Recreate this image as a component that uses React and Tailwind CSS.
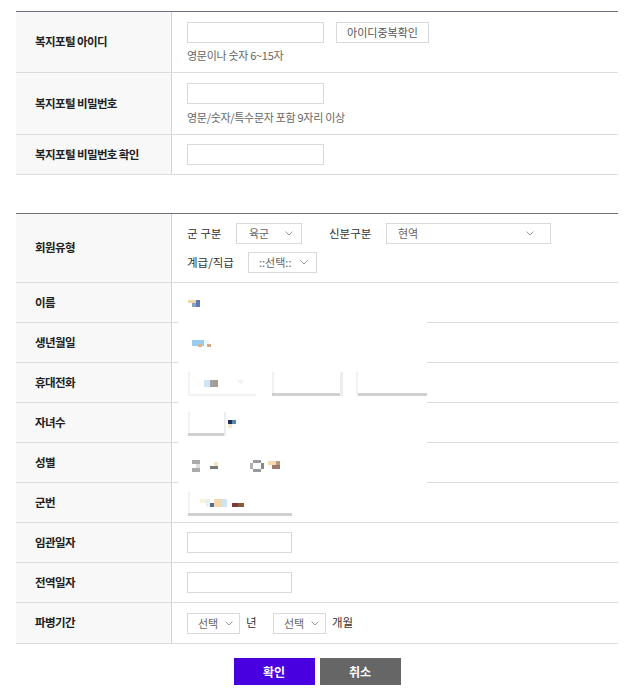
import React from 'react';

const font = { fontFamily: '"Noto Sans CJK KR", "Noto Sans", sans-serif' };

const Chevron = () => (
    <svg width="8" height="5" viewBox="0 0 8 5" className="shrink-0">
        <path d="M0.5 0.5 L4 4 L7.5 0.5" fill="none" stroke="#9a9a9a" strokeWidth="1" />
    </svg>
);

const Select = ({ text, width, pl = 'pl-[12px]', pr = 'pr-[8px]' }) => (
    <div className={`flex h-[21px] items-center justify-between border border-[#d9d9d9] bg-white ${pl} ${pr} text-[11px] text-[#666]`} style={{ width }}>
        <span>{text}</span>
        <Chevron />
    </div>
);

const Input = ({ w = 'w-[137px]' }) => <div className={`h-[21px] ${w} border border-[#d9d9d9] bg-white`} />;

const Row = ({ label, h, children }) => (
    <div className={`grid grid-cols-[156px_1fr] border-b border-[#dcdcdc] ${h}`}>
        <div className="flex items-center border-r border-[#d4d4d4] bg-[#f8f8f8] pl-[19px] text-[11.5px] font-bold tracking-[-0.6px] text-[#222]">
            {label}
        </div>
        <div className="flex flex-col justify-center pl-[15px] text-[11.5px] text-[#333]">{children}</div>
    </div>
);

const Blob = ({ c, cls }) => <div className={`absolute ${cls}`} style={{ background: c }} />;

const App = () => {
    return (
        <div className="min-h-[694px] bg-white pt-[11px]" style={font}>
            <div className="ml-[16px] w-[602px]">
                {/* 계정 정보 */}
                <div className="border-t border-[#70707a]">
                    <Row label="복지포털 아이디" h="h-[61px]">
                        <div className="flex items-center gap-[12px]">
                            <Input />
                            <div className="flex h-[21px] w-[93px] items-center justify-center border border-[#d9d9d9] bg-white text-[11px] text-[#555]">
                                아이디중복확인
                            </div>
                        </div>
                        <div className="mt-[4px] text-[11px] leading-[16px] tracking-[-0.3px] text-[#666]">영문이나 숫자 6~15자</div>
                    </Row>
                    <Row label="복지포털 비밀번호" h="h-[62px]">
                        <Input />
                        <div className="mt-[5px] text-[11px] leading-[16px] tracking-[-0.3px] text-[#666]">영문/숫자/특수문자 포함 9자리 이상</div>
                    </Row>
                    <Row label="복지포털 비밀번호 확인" h="h-[40px]">
                        <Input />
                    </Row>
                </div>

                {/* 회원 정보 */}
                <div className="relative mt-[38px] border-t border-[#70707a]">
                    <Row label="회원유형" h="h-[69px]">
                        <div className="flex items-center">
                            <span className="w-[49px]">군 구분</span>
                            <Select text="육군" width="66px" />
                            <span className="ml-[27px] w-[57px]">신분구분</span>
                            <Select text="현역" width="165px" pl="pl-[11px]" pr="pr-[16px]" />
                        </div>
                        <div className="mt-[8px] flex items-center">
                            <span className="w-[61px]">계급/직급</span>
                            <Select text="::선택::" width="69px" pl="pl-[10px]" />
                        </div>
                    </Row>
                    <Row label="이름" h="h-[40px]" />
                    <Row label="생년월일" h="h-[40px]" />
                    <Row label="휴대전화" h="h-[40px]" />
                    <Row label="자녀수" h="h-[40px]" />
                    <Row label="성별" h="h-[40px]" />
                    <Row label="군번" h="h-[40px]" />
                    <Row label="임관일자" h="h-[40px]">
                        <Input w="w-[105px]" />
                    </Row>
                    <Row label="전역일자" h="h-[40px]">
                        <Input w="w-[105px]" />
                    </Row>
                    <Row label="파병기간" h="h-[41px]">
                        <div className="flex items-center">
                            <Select text="선택" width="53px" pl="pl-[10px]" pr="pr-[6px]" />
                            <span className="ml-[6px] w-[27px]">년</span>
                            <Select text="선택" width="53px" pl="pl-[10px]" pr="pr-[6px]" />
                            <span className="ml-[6px]">개월</span>
                        </div>
                    </Row>

                    {/* 가려진 개인정보 영역 */}
                    <div className="absolute left-[162px] top-[71px] h-[237px] w-[249px] bg-white">
                        {/* 이름 */}
                        <Blob c="#f2d6a8" cls="left-[10px] top-[15px] h-[3px] w-[8px]" />
                        <Blob c="#8aa2c8" cls="left-[14px] top-[18px] h-[4px] w-[4px]" />
                        <Blob c="#5b7ab8" cls="left-[18px] top-[15px] h-[7px] w-[4px]" />
                        {/* 생년월일 */}
                        <Blob c="#9ccbf0" cls="left-[14px] top-[55px] h-[6px] w-[12px]" />
                        <Blob c="#d9b48a" cls="left-[20px] top-[59px] h-[3px] w-[4px]" />
                        <Blob c="#d4a98a" cls="left-[29px] top-[59px] h-[3px] w-[4px]" />
                        <Blob c="#eef6fb" cls="left-[26px] top-[55px] h-[4px] w-[5px]" />
                        {/* 휴대전화 */}
                        <Blob c="#f2f2f2" cls="left-[10px] top-[87px] h-[24px] w-[2px]" />
                        <Blob c="#f2f2f2" cls="left-[10px] top-[109px] h-[2px] w-[68px]" />
                        <Blob c="#cde6f2" cls="left-[26px] top-[95px] h-[7px] w-[6px]" />
                        <Blob c="#9fa3a8" cls="left-[32px] top-[95px] h-[7px] w-[4px]" />
                        <Blob c="#a99c88" cls="left-[36px] top-[95px] h-[7px] w-[4px]" />
                        <Blob c="#f2f2f2" cls="left-[60px] top-[95px] h-[3px] w-[5px]" />
                        <Blob c="#f2f2f2" cls="left-[94px] top-[87px] h-[24px] w-[2px]" />
                        <Blob c="#d0d0d0" cls="left-[94px] top-[108px] h-[3px] w-[68px]" />
                        <Blob c="#ededed" cls="left-[162px] top-[87px] h-[24px] w-[3px]" />
                        <Blob c="#f2f2f2" cls="left-[178px] top-[87px] h-[24px] w-[2px]" />
                        <Blob c="#d0d0d0" cls="left-[180px] top-[108px] h-[3px] w-[69px]" />
                        {/* 자녀수 */}
                        <Blob c="#f2f2f2" cls="left-[10px] top-[127px] h-[24px] w-[2px]" />
                        <Blob c="#d0d0d0" cls="left-[10px] top-[148px] h-[3px] w-[36px]" />
                        <Blob c="#ededed" cls="left-[46px] top-[127px] h-[24px] w-[2px]" />
                        <Blob c="#22305e" cls="left-[50px] top-[135px] h-[4px] w-[4px]" />
                        <Blob c="#5a86a8" cls="left-[54px] top-[135px] h-[4px] w-[4px]" />
                        <Blob c="#f4e6c8" cls="left-[50px] top-[139px] h-[4px] w-[4px]" />
                        {/* 성별 */}
                        <Blob c="#aaaaaa" cls="left-[14px] top-[175px] h-[4px] w-[8px]" />
                        <Blob c="#dddddd" cls="left-[18px] top-[179px] h-[4px] w-[4px]" />
                        <Blob c="#aaaaaa" cls="left-[14px] top-[183px] h-[4px] w-[8px]" />
                        <Blob c="#7a7a7a" cls="left-[32px] top-[181px] h-[3px] w-[8px]" />
                        <Blob c="#f4e6c8" cls="left-[36px] top-[177px] h-[4px] w-[4px]" />
                        <Blob c="#999999" cls="left-[75px] top-[175px] h-[3px] w-[8px]" />
                        <Blob c="#b0b0b0" cls="left-[72px] top-[178px] h-[6px] w-[3px]" />
                        <Blob c="#888888" cls="left-[83px] top-[178px] h-[6px] w-[3px]" />
                        <Blob c="#999999" cls="left-[75px] top-[184px] h-[3px] w-[8px]" />
                        <Blob c="#f4dcb0" cls="left-[90px] top-[176px] h-[4px] w-[8px]" />
                        <Blob c="#9a7a6a" cls="left-[94px] top-[180px] h-[4px] w-[8px]" />
                        <Blob c="#b89880" cls="left-[98px] top-[176px] h-[4px] w-[4px]" />
                        {/* 군번 */}
                        <Blob c="#f2f2f2" cls="left-[10px] top-[207px] h-[24px] w-[2px]" />
                        <Blob c="#d0d0d0" cls="left-[10px] top-[228px] h-[3px] w-[104px]" />
                        <Blob c="#fbf3d6" cls="left-[22px] top-[214px] h-[4px] w-[6px]" />
                        <Blob c="#e6f2f6" cls="left-[28px] top-[214px] h-[8px] w-[4px]" />
                        <Blob c="#5a6a8a" cls="left-[32px] top-[218px] h-[4px] w-[4px]" />
                        <Blob c="#f2d8b0" cls="left-[36px] top-[214px] h-[8px] w-[8px]" />
                        <Blob c="#cfe6f2" cls="left-[44px] top-[214px] h-[8px] w-[5px]" />
                        <Blob c="#7a3a3a" cls="left-[54px] top-[218px] h-[4px] w-[6px]" />
                        <Blob c="#8a5a3a" cls="left-[60px] top-[218px] h-[4px] w-[6px]" />
                    </div>
                </div>

                <div className="mt-[14px] flex justify-center gap-[5px]">
                    <button className="h-[27px] w-[81px] bg-[#4800e0] text-[12px] font-bold text-white">확인</button>
                    <button className="h-[27px] w-[81px] bg-[#666666] text-[12px] font-bold text-white">취소</button>
                </div>
            </div>
        </div>
    );
};

export default App;
